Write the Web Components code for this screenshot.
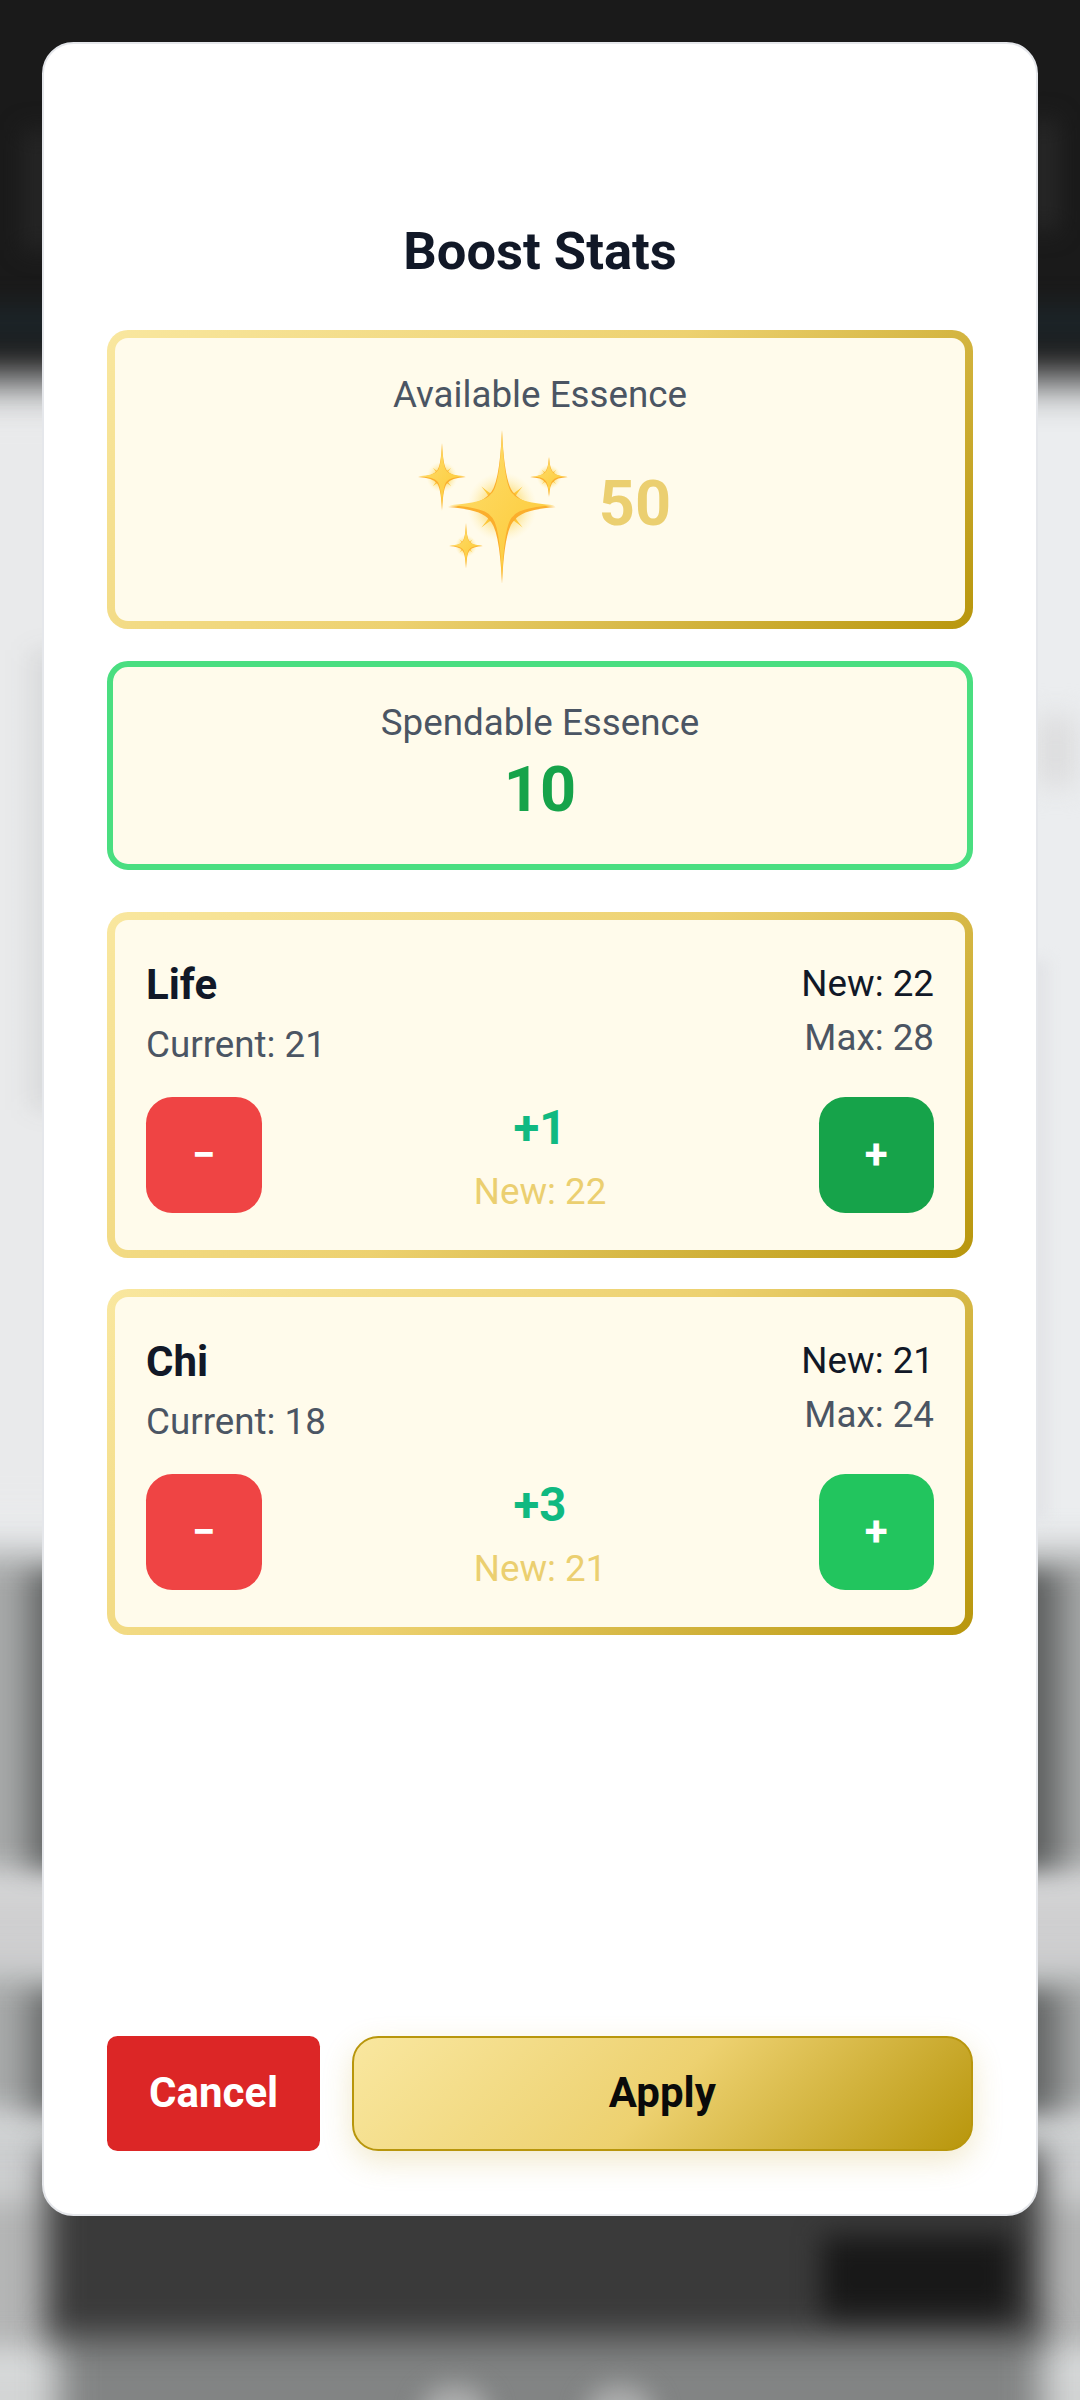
<!DOCTYPE html>
<html lang="en">
<head>
<meta charset="utf-8">
<title>Boost Stats</title>
<style>
  html, body { margin: 0; height: 2400px; overflow: hidden; background: #ebedef; }
  body { font-family: Roboto, "Liberation Sans", sans-serif; position: relative; }
</style>
</head>
<body>
<blurred-backdrop></blurred-backdrop>
<boost-modal heading="Boost Stats">
  <essence-panel label="Available Essence" tone="gold" value="50" sparkle></essence-panel>
  <essence-panel label="Spendable Essence" tone="green" value="10"></essence-panel>
  <stat-card name="Life" current="21" next="22" max="28" delta="+1" plus="#16a34a"></stat-card>
  <stat-card name="Chi" current="18" next="21" max="24" delta="+3" plus="#22c55e"></stat-card>
  <action-button slot="actions" kind="cancel">Cancel</action-button>
  <action-button slot="actions" kind="apply">Apply</action-button>
</boost-modal>

<script>
// Blurred page behind the dialog, only its edges show
class BlurredBackdrop extends HTMLElement {
  constructor() {
    super();
    this.attachShadow({ mode: 'open' });
    this.shadowRoot.innerHTML = `
      <style>
        :host { position: absolute; inset: 0; overflow: hidden; display: block; background: #ebedef; }
        div { position: absolute; }
        .top { left: -80px; right: -80px; top: -80px; height: 460px; background: #1a1a1a; filter: blur(22px); }
        .tint { left: -80px; right: -80px; top: 305px; height: 36px; background: #1c2428; filter: blur(12px); }
        .glow-l { left: 24px; top: 130px; width: 30px; height: 120px; background: #262626; filter: blur(12px); }
        .glow-r { left: 1032px; top: 120px; width: 24px; height: 110px; background: #2a2a2a; filter: blur(12px); }
        .shade-r { left: 1036px; top: 716px; width: 40px; height: 70px; background: #dcdcdd; filter: blur(14px); }
        .pale-r { left: 1030px; top: 960px; width: 18px; height: 560px; background: #e2e3e6; filter: blur(7px); }
        .band { left: -80px; right: -80px; background: #a8aaaa; filter: blur(18px); }
        .b0 { top: 400px; height: 1120px; background: #e9eaeb; left: -80px; right: 900px; }
        .b1 { top: 1552px; height: 328px; }
        .b1b { top: 1880px; height: 90px; background: #cfcfd0; }
        .b2 { top: 1970px; height: 150px; }
        .b2b { top: 2120px; height: 70px; background: #cbcdce; }
        .b3 { top: 2190px; height: 170px; background: #b4b5b5; }
        .b4 { top: 2360px; height: 90px; background: #d2d4d4; filter: blur(20px); }
        /* side shading, darkens towards the dialog */
        .edge { width: 140px; filter: blur(12px); }
        .el { left: -60px; background: linear-gradient(90deg, transparent 70px, var(--shade) 112px); }
        .er { left: 1000px; background: linear-gradient(270deg, transparent 60px, var(--shade) 102px); }
        .e0 { --shade: rgba(60, 62, 66, .13); top: 650px; height: 460px; width: 120px; }
        .e0.el { background: linear-gradient(90deg, transparent 80px, var(--shade) 112px); }
        .e1 { --shade: rgba(40, 42, 42, .6); top: 1570px; height: 300px; }
        .e2 { --shade: rgba(40, 42, 42, .54); top: 1990px; height: 125px; }
        .foot { left: 58px; width: 984px; top: 2320px; height: 140px; background: #828484; filter: blur(18px); }
        .under { left: 46px; width: 996px; top: 2150px; height: 190px; background: #3a3a3a; filter: blur(17px); }
        .under2 { left: 822px; width: 190px; top: 2236px; height: 80px; background: #181818; filter: blur(14px); }
        .bump { width: 70px; top: 2385px; height: 60px; background: #adaeae; border-radius: 50%; filter: blur(12px); }
      </style>
      <div class="band b0"></div>
      <div class="band b1"></div><div class="band b1b"></div><div class="band b2"></div>
      <div class="band b2b"></div><div class="band b3"></div><div class="band b4"></div>
      <div class="top"></div><div class="tint"></div><div class="glow-l"></div><div class="glow-r"></div>
      <div class="shade-r"></div><div class="pale-r"></div>
      <div class="edge el e0"></div>
      <div class="edge el e1"></div><div class="edge er e1"></div>
      <div class="edge el e2"></div><div class="edge er e2"></div>
      <div class="foot"></div><div class="under"></div><div class="under2"></div>
      <div class="bump" style="left:420px"></div><div class="bump" style="left:585px"></div>
    `;
  }
}

// White dialog: heading, default slot for the panels, actions pinned at the bottom
class BoostModal extends HTMLElement {
  constructor() {
    super();
    this.attachShadow({ mode: 'open' });
    this.shadowRoot.innerHTML = `
      <style>
        :host {
          position: relative;
          display: flex;
          flex-direction: column;
          box-sizing: border-box;
          margin: 42px 42px 0;
          height: 2174px;
          padding: 170.5px 63px 63px;
          background: #fff;
          border: 2px solid #e5e7eb;
          border-radius: 31.5px;
        }
        h2 {
          margin: 0 0 42px;
          font: 700 52.5px/73.5px Roboto, "Liberation Sans", sans-serif;
          color: #111827;
          text-align: center;
        }
        footer { margin-top: auto; display: flex; gap: 31.5px; }
      </style>
      <h2></h2>
      <slot></slot>
      <footer><slot name="actions"></slot></footer>
    `;
  }
  connectedCallback() {
    this.shadowRoot.querySelector('h2').textContent = this.getAttribute('heading');
  }
}

// Four pointed star, thin arms meeting at a small body of half width b
function starPath(cx, cy, rx, ry, b) {
  const p = (x, y) => `${cx + x} ${cy + y}`;
  const t = b * 0.2;
  return `M${p(0, -ry)}Q${p(t, -b * 1.5)} ${p(b, -b)}Q${p(b * 1.5, -t)} ${p(rx, 0)}` +
         `Q${p(b * 1.5, t)} ${p(b, b)}Q${p(t, b * 1.5)} ${p(0, ry)}` +
         `Q${p(-t, b * 1.5)} ${p(-b, b)}Q${p(-b * 1.5, t)} ${p(-rx, 0)}` +
         `Q${p(-b * 1.5, -t)} ${p(-b, -b)}Q${p(-t, -b * 1.5)} ${p(0, -ry)}Z`;
}

function sparkle(cx, cy, rx, ry) {
  const b = Math.min(rx, ry) * 0.24;
  const d = Math.min(rx, ry) * 0.54; // little diagonal rays
  return `
    <circle cx="${cx}" cy="${cy}" r="${d * 1.2}" fill="url(#halo)"/>
    <path d="${starPath(cx, cy, d, d, b * 0.55)}" transform="rotate(45 ${cx} ${cy})" fill="#fdc636"/>
    <path d="${starPath(cx, cy, rx, ry, b)}" fill="#fbae2c"/>
    <path d="${starPath(cx, cy - b * 0.14, rx * 0.97, ry * 0.97, b * 0.86)}" fill="url(#body)"/>`;
}

class EssencePanel extends HTMLElement {
  constructor() {
    super();
    this.attachShadow({ mode: 'open' });
    this.shadowRoot.innerHTML = `
      <style>
        :host {
          display: block;
          box-sizing: border-box;
          margin-bottom: 31.5px;
          padding: 31.5px;
          border-radius: 21px;
          text-align: center;
          font-family: Roboto, "Liberation Sans", sans-serif;
        }
        :host([tone="gold"]) {
          border: 8px solid transparent;
          padding: 31px;
          background: linear-gradient(#fffbeb, #fffbeb) padding-box,
            linear-gradient(135deg, #f9e79f 0%, #edd170 50%, #b8960c 100%) border-box;
        }
        :host([tone="green"]) {
          border: 6px solid #4ade80;
          padding: 30.5px;
          background: #fffbeb;
          margin-bottom: 42px;
          height: 209px;
        }
        .label { font-size: 36.75px; line-height: 52.5px; color: #4b5563; }
        .row { display: flex; justify-content: center; align-items: center; }
        .value { font-size: 63px; line-height: 84px; font-weight: 700; }
        :host([tone="gold"]) .value { color: #ebcf70; margin-top: -4px; }
        :host([tone="green"]) .value { color: #16a34a; margin-top: -2px; }
        svg { display: block; overflow: visible; width: 148px; height: 148px; margin: 11px 32px 9.5px 10px; }
      </style>
      <div class="label"></div>
      <div class="row"><span class="value"></span></div>
    `;
  }
  connectedCallback() {
    this.shadowRoot.querySelector('.label').textContent = this.getAttribute('label');
    this.shadowRoot.querySelector('.value').textContent = this.getAttribute('value');
    if (this.hasAttribute('sparkle')) {
      const holder = document.createElement('template');
      holder.innerHTML = `
        <svg viewBox="0 0 148 148" aria-hidden="true">
          <defs>
            <radialGradient id="halo">
              <stop offset="0" stop-color="#fdd75e"/>
              <stop offset=".6" stop-color="#fde48f" stop-opacity=".75"/>
              <stop offset="1" stop-color="#fff3c4" stop-opacity="0"/>
            </radialGradient>
            <linearGradient id="body" x1="0" y1="0" x2="1" y2="1">
              <stop offset="0" stop-color="#fedf74"/>
              <stop offset=".6" stop-color="#fdd14a"/>
              <stop offset="1" stop-color="#fcc636"/>
            </linearGradient>
          </defs>
          ${sparkle(23, 44, 24, 34)}
          ${sparkle(130, 44, 19, 20)}
          ${sparkle(47, 113, 17, 23)}
          ${sparkle(83, 74, 54, 77)}
        </svg>`;
      this.shadowRoot.querySelector('.row').prepend(holder.content);
    }
  }
}

class StatCard extends HTMLElement {
  constructor() {
    super();
    this.attachShadow({ mode: 'open' });
    this.shadowRoot.innerHTML = `
      <style>
        :host {
          display: block;
          box-sizing: border-box;
          margin-bottom: 31px;
          padding: 31.5px 31px;
          border: 8px solid transparent;
          border-radius: 21px;
          background: linear-gradient(#fffbeb, #fffbeb) padding-box,
            linear-gradient(135deg, #f9e79f 0%, #edd170 50%, #b8960c 100%) border-box;
          font-family: Roboto, "Liberation Sans", sans-serif;
        }
        .head { display: flex; justify-content: space-between; margin-bottom: 21px; }
        .name { font-size: 42px; line-height: 63px; font-weight: 700; color: #111827; padding-top: 2px; }
        .small { font-size: 36.75px; line-height: 52.5px; color: #4b5563; }
        .current { margin-top: 2.5px; }
        .side { text-align: right; padding-top: 6.5px; }
        .next { color: #111827; }
        .max { margin-top: 2px; }
        .controls { display: flex; justify-content: space-between; align-items: center; }
        .mid { text-align: center; }
        .delta { font-size: 47.25px; line-height: 73.5px; font-weight: 700; color: #10b981; }
        .preview { color: #ebcf70; }
        button {
          width: 115.5px;
          height: 115.5px;
          border: 0;
          border-radius: 26.25px;
          padding: 0;
          color: #fff;
          font: 700 42px/1 Roboto, "Liberation Sans", sans-serif;
        }
        .minus { background: #ef4444; }
      </style>
      <div class="head">
        <div>
          <div class="name"></div>
          <div class="small current"></div>
        </div>
        <div class="side">
          <div class="small next"></div>
          <div class="small max"></div>
        </div>
      </div>
      <div class="controls">
        <button class="minus">\u2212</button>
        <div class="mid">
          <div class="delta"></div>
          <div class="small preview"></div>
        </div>
        <button class="plus">+</button>
      </div>
    `;
  }
  connectedCallback() {
    const $ = s => this.shadowRoot.querySelector(s);
    const a = n => this.getAttribute(n);
    $('.name').textContent = a('name');
    $('.current').textContent = 'Current: ' + a('current');
    $('.next').textContent = 'New: ' + a('next');
    $('.max').textContent = 'Max: ' + a('max');
    $('.delta').textContent = a('delta');
    $('.preview').textContent = 'New: ' + a('next');
    $('.plus').style.background = a('plus');
  }
}

class ActionButton extends HTMLElement {
  constructor() {
    super();
    this.attachShadow({ mode: 'open' });
    this.shadowRoot.innerHTML = `
      <style>
        :host {
          display: flex;
          box-sizing: border-box;
          height: 115.5px;
          align-items: center;
          justify-content: center;
          font: 700 42px/1 Roboto, "Liberation Sans", sans-serif;
        }
        :host([kind="cancel"]) {
          flex: none;
          padding: 0 42px;
          background: #dc2626;
          color: #fff;
          border-radius: 10.5px;
        }
        :host([kind="apply"]) {
          flex: 1;
          color: #0a0a0a;
          border: 2px solid #b8960c;
          border-radius: 26.25px;
          background: linear-gradient(135deg, #f9e79f 0%, #edd170 50%, #b8960c 100%);
          box-shadow: 0 10px 30px rgba(196, 162, 40, .24);
        }
      </style>
      <slot></slot>
    `;
  }
}

customElements.define('blurred-backdrop', BlurredBackdrop);
customElements.define('boost-modal', BoostModal);
customElements.define('essence-panel', EssencePanel);
customElements.define('stat-card', StatCard);
customElements.define('action-button', ActionButton);
</script>
</body>
</html>
